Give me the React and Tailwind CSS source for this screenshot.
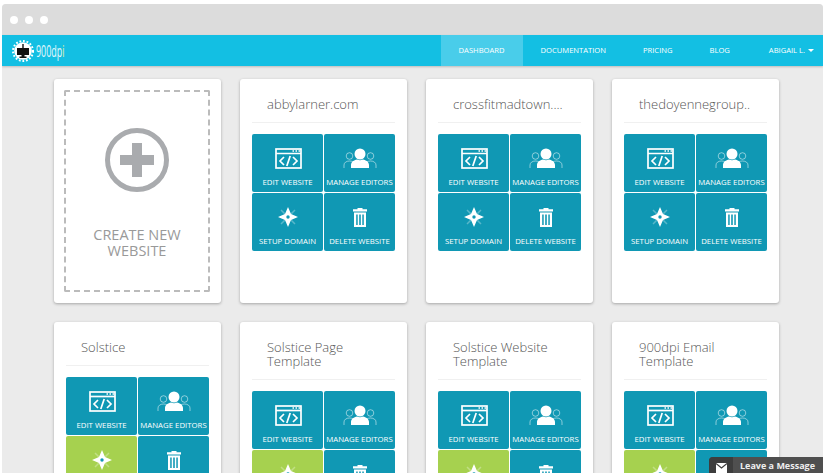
import React from 'react';

const sites = [
	{ name: 'abbylarner.com' },
	{ name: 'crossfitmadtown....' },
	{ name: 'thedoyennegroup..' },
	{ name: 'Solstice', green: true },
	{ name: 'Solstice Page Template', green: true },
	{ name: 'Solstice Website Template', green: true },
	{ name: '900dpi Email Template', green: true },
];

const BrowserIcon = () => (
	<svg width="30" height="28" viewBox="0 0 30 28" fill="none" stroke="white">
		<rect x="3" y="5" width="25" height="19" strokeWidth="1.7" />
		<path d="M3 9.500h25" strokeWidth="1.700" />
		<path d="M19.500 7h1.500M22.500 7h1.500M25.500 7h1.500" strokeWidth="1.500" />
		<path d="M11 13l-4 4 4 4M20 13l4 4-4 4M17.200 12l-3.400 10" strokeWidth="1.700" />
	</svg>
);

const PeopleIcon = () => (
	<svg width="34" height="28" viewBox="0 0 34 28" fill="none">
		<g stroke="white" strokeOpacity="0.5" strokeWidth="1">
			<circle cx="6.500" cy="12" r="3.300" />
			<circle cx="27.500" cy="12" r="3.300" />
			<path d="M1 24v-3c0-2.500 2.500-4 5.500-4 1.500 0 2.500 .3 3.500 1M33 24v-3c0-2.500-2.500-4-5.500-4-1.500 0-2.500 .3-3.500 1" />
		</g>
		<circle cx="17" cy="10" r="5.500" fill="white" />
		<path d="M8 24v-3c0-3 3-5 6-5.500 2 1 4 1 6 0 3 .5 6 2.500 6 5.500v3z" fill="white" />
	</svg>
);

const StarIcon = () => (
	<svg width="24" height="28" viewBox="0 0 24 28">
		<path d="M5 7l14 14M19 7L5 21" stroke="white" strokeOpacity="0.3" strokeWidth="1.500" />
		<path d="M12 4l3 7 7 3-7 3-3 7-3-7-7-3 7-3z" fill="white" />
		<circle cx="12" cy="14" r="1.700" fill="#1098b4" />
	</svg>
);

const TrashIcon = () => (
	<svg width="18" height="28" viewBox="0 0 18 28" fill="white">
		<path d="M6.500 5h5v1.200h-5zM2 6.200h14v2.300H2z" />
		<path d="M3 9.500h12V24H3zM5.200 11.500v10.500h1.500V11.500zM8.200 11.500v10.500h1.600V11.500zM11.300 11.500v10.500h1.500V11.500z" fillRule="evenodd" />
	</svg>
);

const Tile = ({ icon, label, className = 'bg-[#1098b4]' }) => (
	<div className={`h-[58px] rounded-[2px] flex flex-col items-center pt-[10px] ${className}`}>
		{icon}
		<div className="mt-[5px] text-[7.8px] leading-[10px] text-white whitespace-nowrap">{label}</div>
	</div>
);

const SiteCard = ({ site }) => (
	<div className="h-[224px] bg-white rounded-[3px] shadow-[0_1px_3px_rgba(0,0,0,0.3)] px-3">
		<div className="pt-[18px] pb-[11px] pl-[15px] pr-3 text-[13px] leading-[14px] font-light text-[#555] border-b border-[#f0f0f0]">{site.name}</div>
		<div className="mt-[11px] grid grid-cols-2 gap-px">
			<Tile icon={<BrowserIcon />} label="EDIT WEBSITE" />
			<Tile icon={<PeopleIcon />} label="MANAGE EDITORS" />
			<Tile icon={<StarIcon />} label="SETUP DOMAIN" className={site.green ? 'bg-[#a6d14f]' : 'bg-[#1098b4]'} />
			<Tile icon={<TrashIcon />} label="DELETE WEBSITE" />
		</div>
	</div>
);

const CreateCard = () => (
	<div className="h-[224px] bg-white rounded-[3px] shadow-[0_1px_3px_rgba(0,0,0,0.3)] pl-[10px] pr-[11px] py-[11px]">
		<div className="h-full border-2 border-dashed border-[#bbb] rounded-[2px] flex flex-col items-center pt-[35px]">
			<svg width="66" height="66" viewBox="0 0 66 66">
				<circle cx="33" cy="33" r="29.500" fill="none" stroke="#a9abae" strokeWidth="5" />
				<path d="M28 16h10v12h12v10H38v12H28V38H16V28h12z" fill="#a9abae" />
			</svg>
			<div className="mt-[34px] text-center text-[14.5px] leading-[16px] text-[#999]">CREATE NEW<br />WEBSITE</div>
		</div>
	</div>
);

const Logo = () => (
	<div className="flex items-center gap-[2px]">
		<svg width="22" height="22" viewBox="0 0 22 22">
			<circle cx="11" cy="11" r="8.800" fill="white" />
			<circle cx="11" cy="11" r="10" fill="none" stroke="white" strokeWidth="2" strokeDasharray="1.800 1.800" />
			<path d="M5 8h12v7H5zM9.500 15h3v1.500h2V18h-7v-1.500h2zM10.300 4h1.400v4h-1.400z" fill="#111" />
		</svg>
		<div className="w-[27px]">
			<div className="text-[16px] leading-[20px] text-[#e2f7fc] whitespace-nowrap origin-left scale-x-[0.56]">900dp<span className="text-[#e2f09a]">i</span></div>
		</div>
	</div>
);

export default function App() {
	return (
		<div className="h-[473px] overflow-hidden bg-white pl-[2px] pr-[5px] pt-[4px] font-['Open_Sans',sans-serif]">
			<div className="relative h-full overflow-hidden rounded-t-[4px] bg-[#ebebeb]">
				<div className="h-[31px] bg-[#dcdcdc] flex items-center gap-[7px] pl-[8px]">
					<div className="w-[8px] h-[8px] rounded-full bg-white" />
					<div className="w-[8px] h-[8px] rounded-full bg-white" />
					<div className="w-[8px] h-[8px] rounded-full bg-white" />
				</div>
				<nav className="h-[31px] bg-[#13bfe3] shadow-[0_1px_2px_rgba(0,0,0,0.2)] flex items-center justify-between pl-[10px] pr-[9px] text-[7.6px] text-white">
					<Logo />
					<div className="flex items-center h-full">
						<div className="h-full w-[82px] bg-[#49cdea] flex items-center justify-center">DASHBOARD</div>
						<div className="ml-[18px]">DOCUMENTATION</div>
						<div className="ml-[37px]">PRICING</div>
						<div className="ml-[37px]">BLOG</div>
						<div className="ml-[39px] flex items-center gap-[3px]">
							ABIGAIL L.
							<span className="border-x-[3px] border-t-[3px] border-x-transparent border-t-white" />
						</div>
					</div>
				</nav>
				<div className="grid grid-cols-[repeat(4,167px)] gap-[19px] pl-[52px] pt-[13px]">
					<CreateCard />
					{sites.map((site) => <SiteCard key={site.name} site={site} />)}
				</div>
				<div className="absolute right-0 bottom-0 w-[114px] h-[16px] rounded-tl-[4px] bg-[#4f4f4f] flex overflow-hidden">
					<div className="w-[24px] bg-[#3d3d3d] flex justify-center pt-[6px]">
						<svg width="11" height="10" viewBox="0 0 11 10">
							<path d="M0 0h11v10H0z" fill="white" />
							<path d="M0 .5l5.500 4.500L11 .5" fill="none" stroke="#3d3d3d" strokeWidth="1.200" />
						</svg>
					</div>
					<div className="pl-[7px] pt-[3px] text-[9px] leading-[12px] font-bold text-[#eee] whitespace-nowrap">Leave a Message</div>
				</div>
			</div>
		</div>
	);
}
